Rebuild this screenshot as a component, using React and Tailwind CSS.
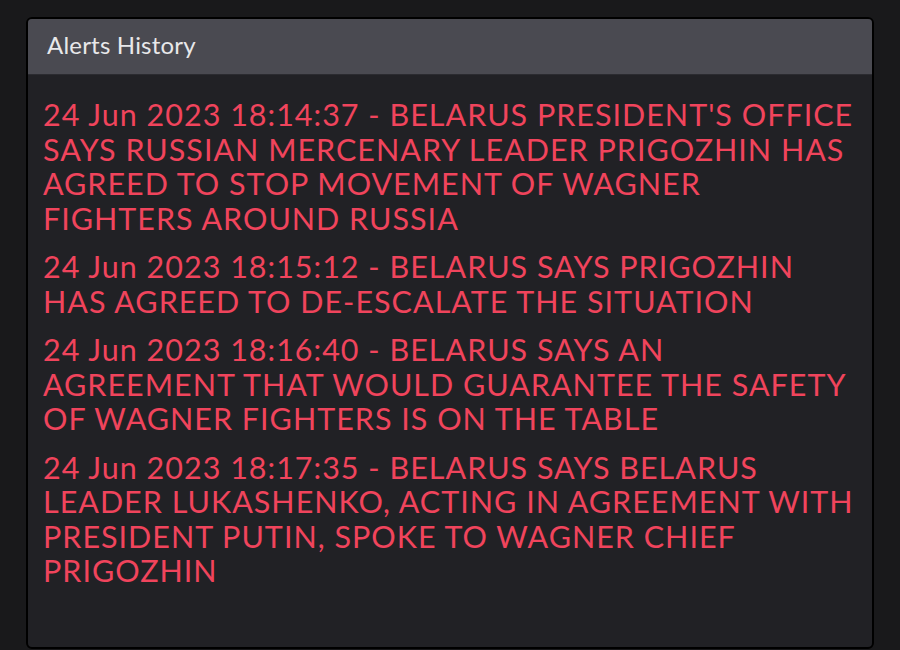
import React from "react";

const alerts = [
  [
    "24 Jun 2023 18:14:37 - BELARUS PRESIDENT'S OFFICE",
    "SAYS RUSSIAN MERCENARY LEADER PRIGOZHIN HAS",
    "AGREED TO STOP MOVEMENT OF WAGNER",
    "FIGHTERS AROUND RUSSIA",
  ],
  [
    "24 Jun 2023 18:15:12 - BELARUS SAYS PRIGOZHIN",
    "HAS AGREED TO DE-ESCALATE THE SITUATION",
  ],
  [
    "24 Jun 2023 18:16:40 - BELARUS SAYS AN",
    "AGREEMENT THAT WOULD GUARANTEE THE SAFETY",
    "OF WAGNER FIGHTERS IS ON THE TABLE",
  ],
  [
    "24 Jun 2023 18:17:35 - BELARUS SAYS BELARUS",
    "LEADER LUKASHENKO, ACTING IN AGREEMENT WITH",
    "PRESIDENT PUTIN, SPOKE TO WAGNER CHIEF",
    "PRIGOZHIN",
  ],
];

export default function App() {
  return (
    <div className="w-[900px] h-[650px] bg-[#19191b] overflow-hidden pt-[17px] pl-[26px] pr-[26px]" style={{ fontFamily: "Lato, 'Open Sans', sans-serif" }}>
      <div className="h-[632px] rounded-md border-2 border-black bg-[#212125] overflow-hidden">
        <div className="h-[56px] bg-[#4a4a51] border-b border-[#2b2b30] flex items-center pl-[19px] pb-[4px]">
          <span className="text-[24px] tracking-[0.2px] text-[#e8e8ea]">Alerts History</span>
        </div>
        <div className="pt-[22px] pl-[15px] flex flex-col gap-[14px]">
          {alerts.map((lines, i) => (
            <p key={i} className="text-[30.5px] tracking-[1px] leading-[34.5px] text-[#f0445c] whitespace-nowrap">
              {lines.map((l, j) => (
                <React.Fragment key={j}>
                  {l}
                  {j < lines.length - 1 && <br />}
                </React.Fragment>
              ))}
            </p>
          ))}
        </div>
      </div>
    </div>
  );
}
